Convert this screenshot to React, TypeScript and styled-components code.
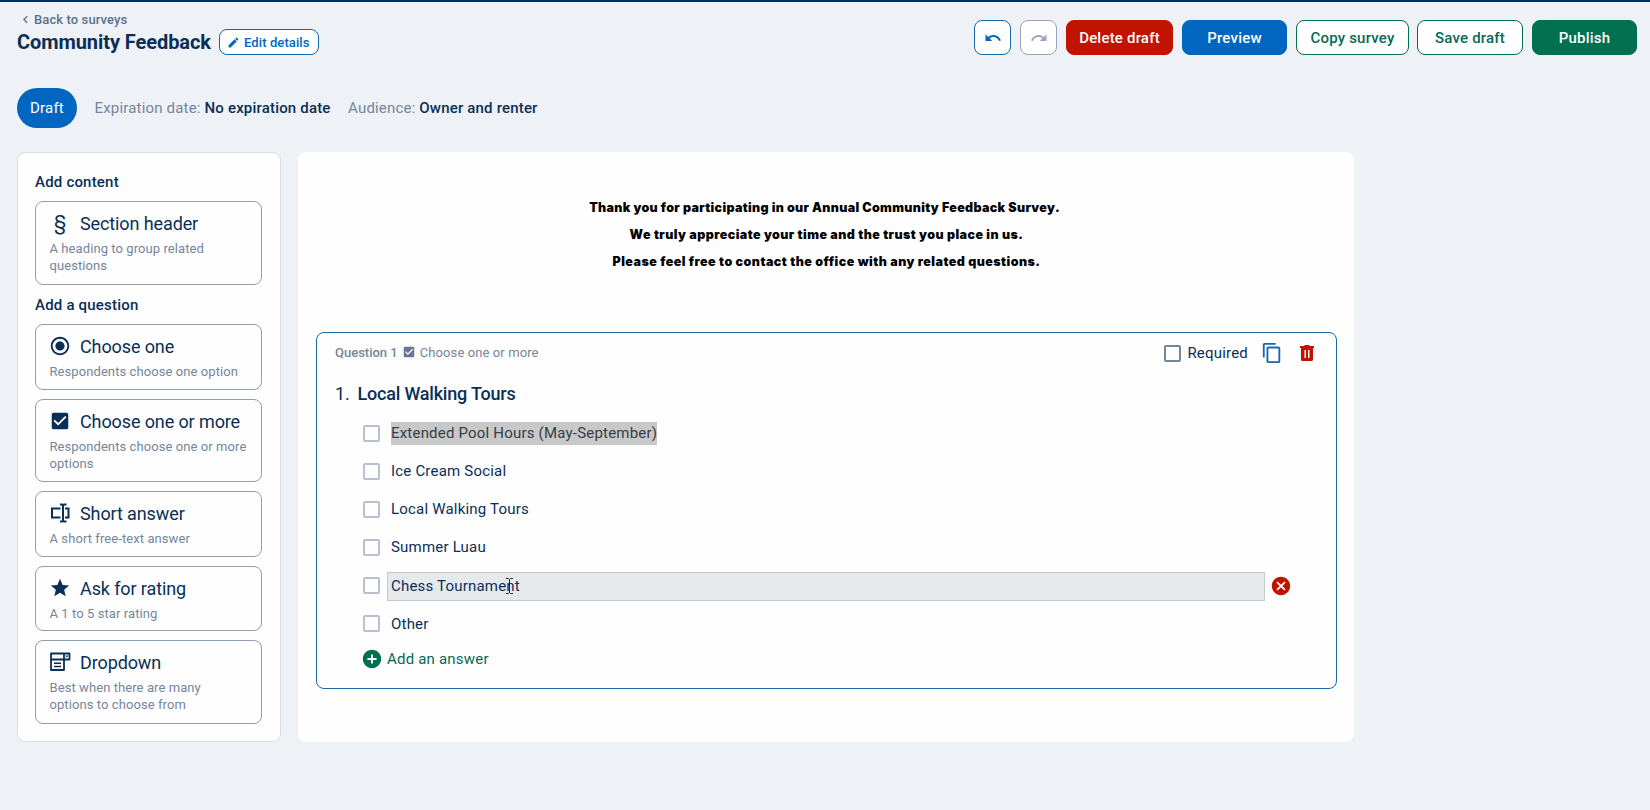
import React from "react";
import styled, { createGlobalStyle, css } from "styled-components";
import {
  MdAddCircle,
  MdCancel,
  MdCheckBox,
  MdChevronLeft,
  MdContentCopy,
  MdEdit,
  MdRadioButtonChecked,
  MdRedo,
  MdStar,
  MdUndo,
} from "react-icons/md";

const navy = "#0a2f57";
const muted = "#74869c";
const blue = "#0066bf";
const green = "#00704f";
const greenText = "#066a55";
const red = "#c01400";
const outline = "#8f9db3";

const GlobalStyle = createGlobalStyle`
  * { box-sizing: border-box; }
  body {
    margin: 0;
    background: #eef1f5;
    color: ${navy};
    font-family: Roboto, "Liberation Sans", sans-serif;
  }
  button { font-family: inherit; cursor: pointer; }
`;

const Page = styled.div`
  height: 810px;
  border-top: 2px solid #06305a;
  overflow: hidden;
`;

const Header = styled.header`
  display: flex;
  justify-content: space-between;
  height: 68px;
  padding: 8px 13px 0 17px;
`;

const BackLink = styled.a`
  display: flex;
  align-items: center;
  height: 18px;
  margin-bottom: 1px;
  color: #5b728c;
  font-size: 13px;
  font-weight: 500;
  letter-spacing: 0.1px;
  svg { margin: 0 1px 0 1px; }
`;

const TitleRow = styled.div`
  display: flex;
  align-items: center;
  gap: 8px;
  height: 26px;
`;

const Title = styled.h1`
  margin: 0;
  font-size: 20px;
  font-weight: 700;
  line-height: 26px;
  letter-spacing: -0.07px;
`;

const EditButton = styled.button`
  display: flex;
  align-items: center;
  gap: 4px;
  width: 100px;
  height: 26px;
  padding: 0 0 0 7px;
  border: 1px solid #1268a8;
  border-radius: 8px;
  background: #fff;
  color: ${blue};
  font-size: 13px;
  font-weight: 500;
  letter-spacing: 0.1px;
`;

const Actions = styled.div`
  display: flex;
  gap: 9px;
  padding-top: 10px;
`;

const Action = styled.button<{ $w: number; $bg?: string; $fg: string; $line: string }>`
  display: flex;
  align-items: center;
  justify-content: center;
  width: ${(p) => p.$w}px;
  height: 35px;
  padding: 0;
  border: 1px solid ${(p) => p.$line};
  border-radius: 8px;
  background: ${(p) => p.$bg ?? "#fff"};
  color: ${(p) => p.$fg};
  font-size: 15px;
  font-weight: 500;
  letter-spacing: 0.2px;
`;

const CopyAction = styled(Action)`
  margin-right: -1px;
`;

const Meta = styled.div`
  display: flex;
  align-items: center;
  gap: 17.5px;
  height: 40px;
  margin: 18px 17px 24px;
  font-size: 15px;
  letter-spacing: 0.18px;
`;

const Badge = styled.span`
  display: flex;
  align-items: center;
  justify-content: center;
  width: 60px;
  height: 40px;
  border-radius: 20px;
  background: ${blue};
  color: #fff;
`;

const MetaItem = styled.span`
  color: ${muted};
  b { color: ${navy}; font-weight: 500; }
`;

const Columns = styled.div`
  display: flex;
  align-items: flex-start;
  gap: 17px;
  padding-left: 17px;
`;

const Sidebar = styled.aside`
  width: 264px;
  height: 590px;
  padding: 17px 18px 17px 17px;
  border: 1px solid #d9dde5;
  border-radius: 8px;
  background: #fefefe;
`;

const GroupLabel = styled.h2`
  margin: 0;
  height: 31px;
  padding-top: 2px;
  font-size: 15px;
  font-weight: 500;
  line-height: 20px;
  letter-spacing: 0.2px;
`;

const Card = styled.div<{ $h: number; $gap?: number }>`
  height: ${(p) => p.$h}px;
  margin-bottom: ${(p) => p.$gap ?? 9}px;
  padding: 10px 13px 0 13.5px;
  border: 1px solid ${outline};
  border-radius: 8px;
`;

const CardTitle = styled.div`
  display: flex;
  align-items: center;
  gap: 9px;
  height: 22px;
  font-size: 18px;
  letter-spacing: -0.11px;
  white-space: nowrap;
`;

const IconSlot = styled.span`
  display: flex;
  align-items: center;
  justify-content: center;
  width: 22px;
  height: 22px;
  margin-left: -0.5px;
  svg { display: block; }
`;

const SectionMark = styled.span`
  font-size: 20px;
  line-height: 22px;
`;

const CardText = styled.p`
  margin: 6px 0 0;
  color: ${muted};
  font-size: 13px;
  line-height: 17px;
  letter-spacing: 0.08px;
`;

const Canvas = styled.main`
  width: 1056px;
  height: 590px;
  padding: 42px 17px 0 18px;
  border-radius: 8px;
  background: #fefefe;
`;

const Intro = styled.div`
  height: 138px;
  color: #000;
  font-family: Inter, "Liberation Sans", sans-serif;
  font-size: 12.5px;
  font-weight: 900;
  line-height: 27px;
  text-align: center;
`;

const Line = styled.p<{ $ls: number; $inset?: number }>`
  margin: 0;
  padding-right: ${(p) => p.$inset ?? 0}px;
  letter-spacing: ${(p) => p.$ls}px;
`;

const Question = styled.section`
  height: 357px;
  padding: 9px 21px 0 18px;
  border: 1px solid #1c66a6;
  border-radius: 8px;
`;

const QuestionHeader = styled.div`
  display: flex;
  align-items: center;
  height: 22px;
  padding-bottom: 2px;
  color: ${muted};
  font-size: 13px;
  letter-spacing: 0.1px;
  b { font-weight: 500; letter-spacing: 0; }
`;

const TypeIcon = styled(MdCheckBox)`
  margin: 0 4px;
  color: #66788f;
`;

const Tools = styled.div`
  display: flex;
  align-items: center;
  margin-left: auto;
  padding-top: 2px;
  color: ${navy};
  font-size: 15px;
  letter-spacing: 0.2px;
`;

const RequiredLabel = styled.span`
  margin: 0 13px 0 6.5px;
`;

const CopyIcon = styled(MdContentCopy)`
  margin-right: 16px;
  color: #1468ae;
`;

const Box = styled.span<{ $dark?: boolean }>`
  flex: none;
  width: 17px;
  height: 17px;
  border: 2px solid ${(p) => (p.$dark ? "#74869f" : "#b7c1d1")};
  border-radius: 2px;
`;

const QuestionTitle = styled.div`
  display: flex;
  height: 42px;
  padding-top: 19px;
  font-size: 18px;
  font-weight: 500;
  line-height: 22px;
  letter-spacing: -0.2px;
`;

const QuestionNumber = styled.span`
  width: 22.5px;
  font-weight: 400;
`;

const Options = styled.div`
  padding: 8.5px 0 0 28px;
`;

const Option = styled.div`
  display: flex;
  align-items: center;
  height: 38px;
`;

const Field = styled.div<{ $active?: boolean; $drop?: boolean }>`
  width: 878px;
  height: 29px;
  margin-left: 7px;
  margin-top: ${(p) => (p.$drop ? 2 : 0)}px;
  padding: 0 3px;
  border: 1px solid transparent;
  font-size: 15px;
  line-height: 27px;
  letter-spacing: 0.2px;
  ${(p) =>
    p.$active &&
    css`
      border-color: #c5cad1;
      background: #e6e9ec;
    `}
`;

const Selected = styled.span<{ $on: boolean }>`
  ${(p) => p.$on && css`
    padding: 2px 0 3px;
    background: #c8c8c8;
    color: #343d49;
  `}
`;

const AddAnswer = styled.div`
  display: flex;
  align-items: center;
  gap: 4px;
  height: 24px;
  margin: 4px 0 0 -2px;
  color: ${greenText};
  font-size: 15px;
  letter-spacing: 0.2px;
  svg { color: ${green}; }
`;

const Cancel = styled(MdCancel)`
  margin-left: 5px;
  color: ${red};
`;

const ShortAnswerIcon = () => (
  <svg width="20" height="20" viewBox="0 0 20 20" fill="none" stroke={navy} strokeWidth="2">
    <path d="M10.5 5.500H2v9h8.500M15 5.500h3.500v9H15M13 2.500v15M10 1.500h2l1 1 1-1h2.500M10 18.500h2l1-1 1 1h2.500" />
  </svg>
);

const DropdownIcon = () => (
  <svg width="21" height="20" viewBox="0 0 21 20" fill="none" stroke={navy} strokeWidth="1.800">
    <path d="M14 7.500v10.500H1V1.500h18.500v6H1M14 1.500v6" strokeLinejoin="round" />
    <path d="M4 11.200h7M4 14.500h7" strokeWidth="1.600" />
    <path d="M15.300 3.500h3.200l-1.600 2z" fill={navy} stroke="none" />
  </svg>
);

const TrashIcon = () => (
  <svg width="16" height="18" viewBox="0 0 16 18" fill={red}>
    <path fillRule="evenodd" d="M1 2h4l1-1h4l1 1h4v2H1zM2 4h12V15.500a1.500 1.500 0 0 1-1.500 1.500h-9A1.500 1.500 0 0 1 2 15.500zM5.500 6v8H7V6zM9 6v8h1.500V6z" />
  </svg>
);

const IBeam = styled.svg`
  position: absolute;
  left: 505px;
  top: 578px;
`;

const options = [
  "Extended Pool Hours (May-September)",
  "Ice Cream Social",
  "Local Walking Tours",
  "Summer Luau",
  "Chess Tournament",
  "Other",
];

export default function App() {
  return (
    <Page>
      <GlobalStyle />
      <Header>
        <div>
          <BackLink><MdChevronLeft size={15} />Back to surveys</BackLink>
          <TitleRow>
            <Title>Community Feedback</Title>
            <EditButton><MdEdit size={13} />Edit details</EditButton>
          </TitleRow>
        </div>
        <Actions>
          <Action $w={37} $fg={blue} $line="#1268a8"><MdUndo size={18} /></Action>
          <Action $w={37} $fg="#9aa7ba" $line="#98a5b9"><MdRedo size={18} /></Action>
          <Action $w={107} $bg={red} $fg="#fff" $line={red}>Delete draft</Action>
          <Action $w={105} $bg={blue} $fg="#fff" $line={blue}>Preview</Action>
          <CopyAction $w={113} $fg={greenText} $line={green}>Copy survey</CopyAction>
          <Action $w={106} $fg={greenText} $line={green}>Save draft</Action>
          <Action $w={105} $bg={green} $fg="#fff" $line={green}>Publish</Action>
        </Actions>
      </Header>
      <Meta>
        <Badge>Draft</Badge>
        <MetaItem>Expiration date: <b>No expiration date</b></MetaItem>
        <MetaItem>Audience: <b>Owner and renter</b></MetaItem>
      </Meta>
      <Columns>
        <Sidebar>
          <GroupLabel>Add content</GroupLabel>
          <Card $h={84} $gap={8}>
            <CardTitle><IconSlot><SectionMark>§</SectionMark></IconSlot>Section header</CardTitle>
            <CardText>A heading to group related questions</CardText>
          </Card>
          <GroupLabel>Add a question</GroupLabel>
          <Card $h={66}>
            <CardTitle><IconSlot><MdRadioButtonChecked size={22} /></IconSlot>Choose one</CardTitle>
            <CardText>Respondents choose one option</CardText>
          </Card>
          <Card $h={83}>
            <CardTitle><IconSlot><MdCheckBox size={22} /></IconSlot>Choose one or more</CardTitle>
            <CardText>Respondents choose one or more options</CardText>
          </Card>
          <Card $h={66}>
            <CardTitle><IconSlot><ShortAnswerIcon /></IconSlot>Short answer</CardTitle>
            <CardText>A short free-text answer</CardText>
          </Card>
          <Card $h={65}>
            <CardTitle><IconSlot><MdStar size={22} /></IconSlot>Ask for rating</CardTitle>
            <CardText>A 1 to 5 star rating</CardText>
          </Card>
          <Card $h={84}>
            <CardTitle><IconSlot><DropdownIcon /></IconSlot>Dropdown</CardTitle>
            <CardText>Best when there are many<br />options to choose from</CardText>
          </Card>
        </Sidebar>
        <Canvas>
          <Intro>
            <Line $ls={0.32} $inset={4}>Thank you for participating in our Annual Community Feedback Survey.</Line>
            <Line $ls={0.43}>We truly appreciate your time and the trust you place in us.</Line>
            <Line $ls={0.45}>Please feel free to contact the office with any related questions.</Line>
          </Intro>
          <Question>
            <QuestionHeader>
              <b>Question 1</b><TypeIcon size={14} />Choose one or more
              <Tools><Box $dark /><RequiredLabel>Required</RequiredLabel><CopyIcon size={22} /><TrashIcon /></Tools>
            </QuestionHeader>
            <QuestionTitle><QuestionNumber>1.</QuestionNumber><span>Local Walking Tours</span></QuestionTitle>
            <Options>
              {options.map((o, i) => (
                <Option key={o}>
                  <Box />
                  <Field $active={i === 4} $drop={i >= 4}><Selected $on={i === 0}>{o}</Selected></Field>
                  {i === 4 && <Cancel size={22} />}
                </Option>
              ))}
              <AddAnswer><MdAddCircle size={22} />Add an answer</AddAnswer>
            </Options>
          </Question>
        </Canvas>
      </Columns>
      <IBeam width="9" height="16" viewBox="0 0 9 16" fill="none" stroke="#222">
        <path d="M1 .500h2.500l1 1 1-1H8M4.500 1v14M1 15.500h2.500l1-1 1 1H8" />
      </IBeam>
    </Page>
  );
}
